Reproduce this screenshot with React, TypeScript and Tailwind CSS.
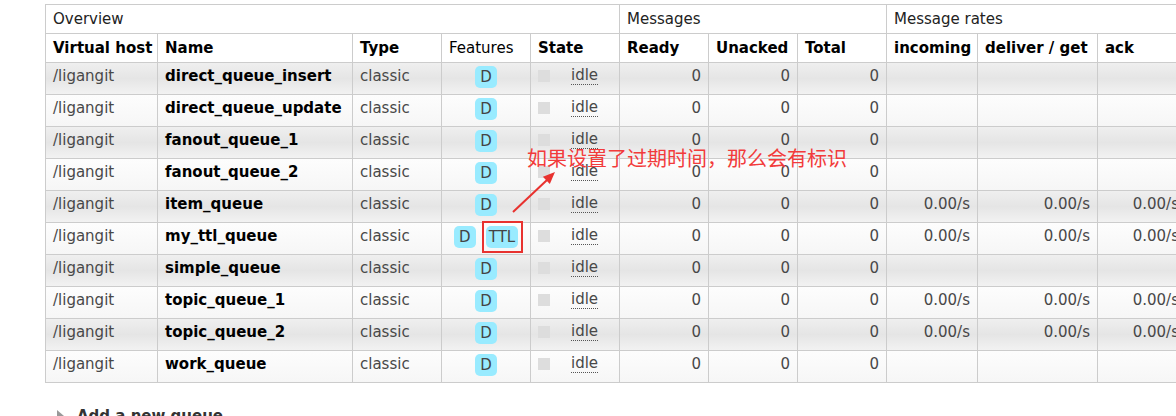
type Queue = {
  name: string
  ttl?: boolean
  rates?: boolean
}

const queues: Queue[] = [
  { name: 'direct_queue_insert' },
  { name: 'direct_queue_update' },
  { name: 'fanout_queue_1' },
  { name: 'fanout_queue_2' },
  { name: 'item_queue', rates: true },
  { name: 'my_ttl_queue', ttl: true, rates: true },
  { name: 'simple_queue' },
  { name: 'topic_queue_1', rates: true },
  { name: 'topic_queue_2', rates: true },
  { name: 'work_queue' },
]

const cell = 'border-r border-b border-[#ccc] whitespace-nowrap'
const head = `${cell} flex items-center bg-white px-[7px]`

function Badge({ label }: { label: string }) {
  return (
    <span className="inline-block h-[22px] min-w-[22px] rounded-[5px] bg-[#99ebff] px-[3px] text-center leading-[22px] text-[#444]">
      {label}
    </span>
  )
}

function QueueRow({ queue, odd }: { queue: Queue; odd: boolean }) {
  const bg = odd
    ? 'bg-gradient-to-b from-[#efefef] via-[#e5e5e5] to-[#f2f2f2]'
    : 'bg-gradient-to-b from-[#fdfdfd] to-[#f6f6f6]'
  const td = `${cell} ${bg} h-[32px] px-[7px] pt-[4px] leading-[18px]`
  const rate = queue.rates ? '0.00/s' : ''

  return (
    <>
      <div className={td}>/ligangit</div>
      <div className={`${td} font-bold text-black`}>{queue.name}</div>
      <div className={td}>classic</div>
      <div className={`${cell} ${bg} flex h-[32px] items-start justify-center gap-[10px] pt-[3px]`}>
        <Badge label="D" />
        {queue.ttl && (
          <span className="relative">
            <Badge label="TTL" />
            <span className="absolute -top-[5px] -right-[5px] -bottom-[4px] -left-[4px] border-2 border-[#e8322f]" />
          </span>
        )}
      </div>
      <div className={`${td} flex items-start`}>
        <span className="mt-[3px] h-3 w-3 bg-[#dddddd]" />
        <span className="ml-[21px] border-b border-dotted border-[#555] leading-[17px]">idle</span>
      </div>
      <div className={`${td} text-right`}>0</div>
      <div className={`${td} text-right`}>0</div>
      <div className={`${td} text-right`}>0</div>
      <div className={`${td} text-right`}>{rate}</div>
      <div className={`${td} text-right`}>{rate}</div>
      <div className={`${td} text-right`}>{rate}</div>
    </>
  )
}

export default function App() {
  return (
    <div
      className="relative h-[416px] w-full overflow-hidden bg-white pt-1 pl-[45px] text-[15px] text-[#484848]"
      style={{ fontFamily: '"DejaVu Sans", Verdana, sans-serif' }}
    >
      <div className="grid w-max grid-cols-[112px_195px_89px_89px_89px_89px_89px_89px_91px_120px_89px] border-t border-l border-[#ccc]">
        <div className={`${head} col-span-5 h-[29px] text-[#222]`}>Overview</div>
        <div className={`${head} col-span-3 h-[29px] text-[#222]`}>Messages</div>
        <div className={`${head} col-span-3 h-[29px] text-[#222]`}>Message rates</div>

        <div className={`${head} h-[29px] font-bold text-black`}>Virtual host</div>
        <div className={`${head} font-bold text-black`}>Name</div>
        <div className={`${head} font-bold text-black`}>Type</div>
        <div className={`${head} text-black`}>Features</div>
        <div className={`${head} font-bold text-black`}>State</div>
        <div className={`${head} font-bold text-black`}>Ready</div>
        <div className={`${head} font-bold text-black`}>Unacked</div>
        <div className={`${head} font-bold text-black`}>Total</div>
        <div className={`${head} font-bold text-black`}>incoming</div>
        <div className={`${head} font-bold text-black`}>deliver / get</div>
        <div className={`${head} font-bold text-black`}>ack</div>

        {queues.map((q, i) => (
          <QueueRow key={q.name} queue={q} odd={i % 2 === 0} />
        ))}
      </div>

      <div className="mt-[22px] flex items-center pl-3">
        <span className="h-0 w-0 border-y-[6px] border-l-[7px] border-y-transparent border-l-[#999]" />
        <span className="ml-[13px] font-bold text-[#333]">Add a new queue</span>
      </div>

      {/* annotation added on the screenshot */}
      <div
        className="absolute top-[146px] left-[527px] text-[20px] leading-[24px] whitespace-nowrap text-[#f23b3b]"
        style={{ fontFamily: '"Noto Sans CJK SC", sans-serif' }}
      >
        如果设置了过期时间，那么会有标识
      </div>
      <svg className="absolute top-[165px] left-[505px]" width="60" height="55" viewBox="0 0 60 55">
        <line x1="8" y1="47" x2="42" y2="15" stroke="#e8322f" strokeWidth="2" />
        <polygon points="50,7 44.8,18.9 37.9,11.7" fill="#e8322f" />
      </svg>
    </div>
  )
}
